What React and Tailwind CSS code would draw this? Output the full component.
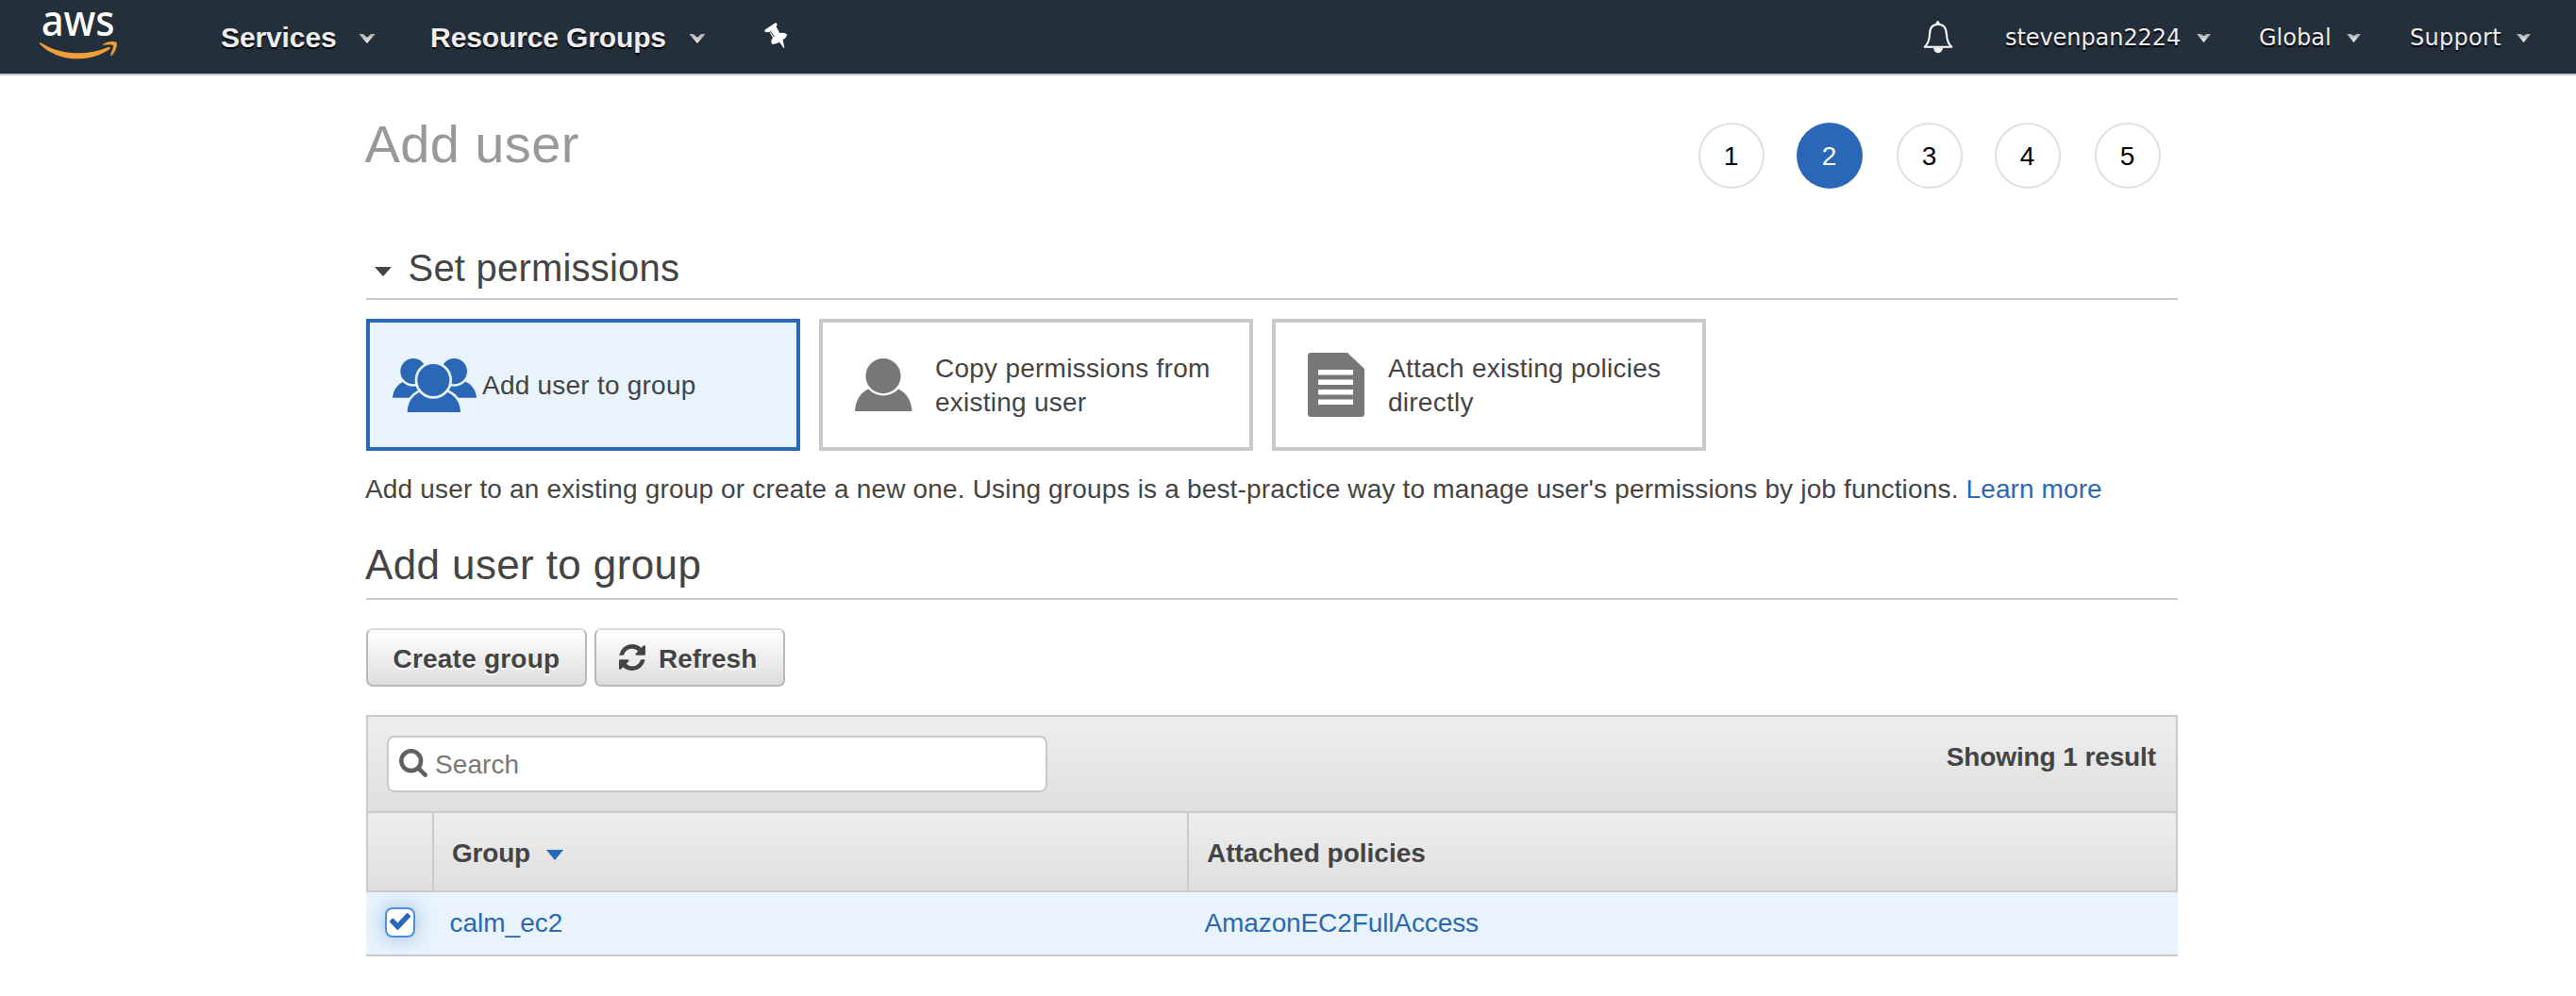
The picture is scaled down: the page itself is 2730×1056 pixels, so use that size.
function NavCaret({ large = false }) {
  return large ? (
    <svg viewBox="0 0 54 30" className="h-[10px] w-[18px]">
      <defs>
        <linearGradient id="caretLarge" x1="0" y1="0" x2="0" y2="1">
          <stop offset="0" stopColor="#a8a8a8" />
          <stop offset="1" stopColor="#f2f2f2" />
        </linearGradient>
      </defs>
      <path d="M1 0H15L27 11 39 0H53L27 30Z" fill="url(#caretLarge)" />
    </svg>
  ) : (
    <svg viewBox="0 0 44 26" className="h-[9px] w-[15px]">
      <defs>
        <linearGradient id="caretSmall" x1="0" y1="0" x2="0" y2="1">
          <stop offset="0" stopColor="#a8a8a8" />
          <stop offset="1" stopColor="#f5f5f5" />
        </linearGradient>
      </defs>
      <path d="M0 0H13L22 6 31 0H44L22 26Z" fill="url(#caretSmall)" />
    </svg>
  );
}

function AwsLogo() {
  return (
    <svg viewBox="60 0 258 192" className="h-[64px] w-[86px] overflow-visible [text-shadow:none]">
      <text
        x="71"
        y="115"
        fontSize="134"
        fontFamily="'Noto Sans', sans-serif"
        fontWeight="500"
        fill="#ffffff"
        textLength="234"
        lengthAdjust="spacingAndGlyphs"
      >
        aws
      </text>
      <path
        fill="#f29d38"
        d="M66 140Q65 133 73 138C140 178 220 176 284 150Q292 148 290 155C262 176 220 187 187 187C135 187 95 168 66 140Z"
      />
      <path
        fill="#f29d38"
        d="M266 142C278 132 300 129 311 135C314 145 307 166 294 178Q290 178 292 172C297 160 302 147 299 144C293 140 280 142 268 143Z"
      />
    </svg>
  );
}

function PinIcon() {
  return (
    <svg viewBox="363 43 75 84" className="h-[28px] w-[25px]">
      <path
        fill="#ffffff"
        d="M364 66L398 44Q404 43 404 50L401 56L412 76Q428 73 436 81Q434 90 422 98L427 124L425 124L411 105Q398 113 387 111Q382 102 390 91L379 72L370 74Q363 72 364 66Z"
      />
      <path d="M382 69L394 88" stroke="#242f3c" strokeWidth="3" />
    </svg>
  );
}

function BellIcon() {
  return (
    <svg viewBox="23 36 96 104" className="h-[35px] w-[32px]" fill="none">
      <circle cx="70" cy="42" r="5.5" fill="#ffffff" />
      <path
        d="M28 119C40 108 43 96 44 80C44 58 54 47 71 47C88 47 97 58 98 80C99 96 102 108 114 119Z"
        stroke="#ffffff"
        strokeWidth="6"
        strokeLinejoin="round"
      />
      <path d="M56 122H86C85 132 78 138 71 138C63 138 57 132 56 122Z" fill="#ffffff" />
      <path d="M61 127L70 133" stroke="#8a9199" strokeWidth="2" />
    </svg>
  );
}

function GroupIcon() {
  return (
    <svg viewBox="0 0 267 171" className="h-[57px] w-[89px] shrink-0" fill="#2a67b7">
      <path d="M0 125C2 98 20 76 44 72H130V125Z" />
      <path d="M267 125C265 98 247 76 223 72H130V125Z" />
      <circle cx="66" cy="41" r="44.5" stroke="#e8f3fd" strokeWidth="7" />
      <circle cx="196" cy="41" r="44.5" stroke="#e8f3fd" strokeWidth="7" />
      <path
        d="M47 175C47 140 62 118 90 106H170C200 118 216 140 216 175Z"
        stroke="#e8f3fd"
        strokeWidth="16"
        paintOrder="stroke"
      />
      <circle cx="130" cy="69" r="55" stroke="#e8f3fd" strokeWidth="8" />
    </svg>
  );
}

function UserIcon() {
  return (
    <svg viewBox="0 0 61 56" className="h-[56px] w-[61px] shrink-0" fill="#777777">
      <circle cx="30" cy="18.6" r="18.6" />
      <path d="M0 56C1 44 6 36 14.5 32.5C22 41.5 38 41.5 46 32.5C54 36 60 44 60.5 56Z" />
    </svg>
  );
}

function DocumentIcon() {
  return (
    <svg viewBox="0 0 60 68" className="h-[68px] w-[60px] shrink-0" fill="#777777">
      <path d="M3 0H42L60 17V65Q60 68 57 68H3Q0 68 0 65V3Q0 0 3 0Z" />
      <path fill="#ffffff" d="M11 18H48V23.5H11ZM11 28.5H48V34H11ZM11 39H48V44.5H11ZM11 49.5H48V55H11Z" />
    </svg>
  );
}

function RefreshIcon() {
  return (
    <svg viewBox="0 0 1536 1536" className="-mt-[4px] size-[28px]" fill="currentColor">
      <path d="M1511 928q0 5-1 7-64 268-268 434.5t-478 166.5q-146 0-282.5-55t-243.5-157l-129 129q-19 19-45 19t-45-19-19-45v-448q0-26 19-45t45-19h448q26 0 45 19t19 45-19 45l-137 137q71 66 161 102t187 36q134 0 250-65t186-179q11-17 53-117 8-23 30-23h192q13 0 22.5 9.5t9.5 22.5zm25-800v448q0 26-19 45t-45 19h-448q-26 0-45-19t-19-45 19-45l138-138q-148-137-349-137-134 0-250 65t-186 179q-11 17-53 117-8 23-30 23h-199q-13 0-22.5-9.5t-9.5-22.5v-7q65-268 270-434.5t480-166.5q146 0 284 55.5t245 156.5l130-129q19-19 45-19t45 19 19 45z" />
    </svg>
  );
}

function SearchIcon() {
  return (
    <svg viewBox="64 128 1664 1664" className="-mt-[2px] size-[30px]" fill="#606060">
      <path d="M1216 832q0-185-131.5-316.5t-316.5-131.5-316.5 131.5-131.5 316.5 131.5 316.5 316.5 131.5 316.5-131.5 131.5-316.5zm512 832q0 52-38 90t-90 38q-54 0-90-38l-343-342q-179 124-399 124-143 0-273.5-55.5t-225-150-150-225-55.5-273.5 55.5-273.5 150-225 225-150 273.5-55.5 273.5 55.5 225 150 150 225 55.5 273.5q0 220-124 399l343 343q37 37 37 90z" />
    </svg>
  );
}

function CheckIcon() {
  return (
    <svg viewBox="121 334 1550 1188" preserveAspectRatio="none" className="-mt-[2px] h-[18px] w-[22px]" fill="currentColor">
      <path d="M1671 566q0 40-28 68l-724 724-136 136q-28 28-68 28t-68-28l-136-136-362-362q-28-28-28-68t28-68l136-136q28-28 68-28t68 28l294 295 656-657q28-28 68-28t68 28l136 136q28 28 28 68z" />
    </svg>
  );
}

function Step({ number, active }) {
  return (
    <div
      className={
        active
          ? "flex size-[70px] items-center justify-center rounded-full bg-[#2a67b7] pt-[2px] pr-px text-[28px] text-white"
          : "flex size-[70px] items-center justify-center rounded-full border-2 border-[#e1e1e1] bg-white pt-[2px] pr-px text-[28px] text-black"
      }
    >
      {number}
    </div>
  );
}

function Header() {
  return (
    <header className="flex h-[80px] items-start justify-between border-b-2 border-[#c9c7c9] bg-[#242f3c] leading-[80px] text-[#eeeeee] [text-shadow:0_2px_1px_#000]">
      <div className="flex h-[78px] items-start text-[30px] font-bold">
        <div className="ml-[40px]">
          <AwsLogo />
        </div>
        <span className="ml-[108px] tracking-[-0.108px]">Services</span>
        <span className="mt-[36px] ml-[23.5px]">
          <NavCaret large />
        </span>
        <span className="ml-[58px] tracking-[-0.13px]">Resource Groups</span>
        <span className="mt-[36px] ml-[24px]">
          <NavCaret large />
        </span>
        <span className="mt-[24px] ml-[62px]">
          <PinIcon />
        </span>
      </div>
      <div className="flex h-[78px] items-start pr-[48px] font-['DejaVu_Sans','Liberation_Sans',sans-serif] text-[24px]">
        <span className="mt-[22px] mr-[55px]">
          <BellIcon />
        </span>
        <span className="w-[203px] tracking-[-0.07px]">stevenpan2224</span>
        <span className="mt-[36px] mr-[51px]">
          <NavCaret />
        </span>
        <span className="w-[93px]">Global</span>
        <span className="mt-[36px] mr-[52px]">
          <NavCaret />
        </span>
        <span className="w-[113px] tracking-[0.3px]">Support</span>
        <span className="mt-[36px]">
          <NavCaret />
        </span>
      </div>
    </header>
  );
}

function PermissionOptions() {
  return (
    <div className="mt-5 flex gap-5 leading-[36px]">
      <div className="flex h-[140px] w-[460px] items-center border-4 border-[#2a67b7] bg-[#e8f3fd] pl-[24px]">
        <GroupIcon />
        <span className="ml-[6px] pt-[2px] tracking-[0.23px]">Add user to group</span>
      </div>
      <div className="flex h-[140px] w-[460px] items-center border-4 border-[#cacaca] pl-[34px]">
        <UserIcon />
        <div className="ml-[24px] pt-[2px] tracking-[0.25px]">
          Copy permissions from
          <br />
          existing user
        </div>
      </div>
      <div className="flex h-[140px] w-[460px] items-center border-4 border-[#cacaca] pl-[34px]">
        <DocumentIcon />
        <div className="ml-[25px] pt-[2px] tracking-[0.25px]">
          Attach existing policies
          <br />
          directly
        </div>
      </div>
    </div>
  );
}

function GroupTable() {
  return (
    <div className="mt-[30px]">
      <div className="flex h-[102px] items-start justify-between border-x-2 border-t-2 border-[#cacaca] bg-linear-to-b from-[#eeeeee] to-[#dfdfdf] pt-[20px] pr-[21px] pl-[20px]">
        <label className="flex h-[60px] w-[700px] items-center rounded-[8px] border-2 border-[#cacaca] bg-white pl-[11px]">
          <SearchIcon />
          <input
            className="ml-[8px] w-[600px] pt-[2px] tracking-[0.07px] outline-none placeholder:text-[#777777] placeholder:opacity-100"
            placeholder="Search"
          />
        </label>
        <span className="mt-[5px] leading-[36px] font-bold tracking-[-0.11px]">Showing 1 result</span>
      </div>
      <div className="grid h-[86px] grid-cols-[70px_800px_1fr] border-2 border-[#cacaca] bg-linear-to-b from-[#eeeeee] to-[#dfdfdf] font-bold">
        <div className="border-r-2 border-[#cacaca]" />
        <div className="flex items-center border-r-2 border-[#cacaca] pt-[4px] pl-[19px]">
          <span className="tracking-[-0.2px]">Group</span>
          <svg viewBox="0 0 18 11" className="mt-[3px] ml-[17px] h-[11px] w-[18px]">
            <path d="M0 0H18L9 11Z" fill="#2a67b7" />
          </svg>
        </div>
        <div className="flex items-center pt-[4px] pl-[19px]">Attached policies</div>
      </div>
      <div className="grid h-[68px] grid-cols-[88.5px_801px_1fr] items-center border-b-2 border-[#cacaca] bg-[#e8f3fd] text-[#2a67b7]">
        <div className="-mt-[2px] ml-[20px] flex size-[32px] items-center justify-center rounded-[8px] border-2 border-[#4a8fdf] bg-white shadow-[0_0_20px_rgba(42,103,183,0.4)]">
          <CheckIcon />
        </div>
        <span>calm_ec2</span>
        <span className="-ml-px tracking-[-0.11px]">AmazonEC2FullAccess</span>
      </div>
    </div>
  );
}

const buttonClass =
  "flex h-[62px] items-center rounded-[7px] border-2 border-[#b8b8b8] border-t-[#dadada] bg-linear-to-b from-white to-[#dddddd] pt-[3px] font-bold [text-shadow:0_2px_2px_#fff]";

export default function App() {
  return (
    <div className="h-[1056px] w-[2730px] overflow-hidden bg-white font-['Liberation_Sans',Arial,sans-serif] text-[28px] text-[#444444]">
      <Header />
      <main className="mr-[422px] ml-[388px] w-[1920px]">
        <div className="flex items-start justify-between pt-[36px] pr-[18px]">
          <h1 className="-ml-[1.5px] text-[56px] leading-[73px] tracking-[0.4px] text-[#999999]">Add user</h1>
          <div className="mt-[14px] flex gap-[34px] [&>*:nth-child(2n+3)]:ml-[2px]">
            <Step number={1} />
            <Step number={2} active />
            <Step number={3} />
            <Step number={4} />
            <Step number={5} />
          </div>
        </div>

        <h2 className="mt-[60px] flex h-[58px] items-start border-b-2 border-[#cacaca] text-[40px] leading-[48px] tracking-[0.21px]">
          <svg viewBox="0 0 18 10" className="mt-[23px] ml-[9px] h-[10px] w-[18px]">
            <path d="M0 0H18L9 10Z" fill="#444444" />
          </svg>
          <span className="ml-[17.5px]">Set permissions</span>
        </h2>

        <PermissionOptions />

        <p className="mt-[23px] -ml-px leading-[36px] whitespace-nowrap tracking-[0.17px]">
          Add user to an existing group or create a new one. Using groups is a best-practice way to manage user's
          permissions by job functions. <a className="tracking-[0.1px] text-[#2a67b7]">Learn more</a>
        </p>

        <h2 className="mt-[36px] h-[63px] border-b-2 border-[#cacaca] text-[44px] leading-[52px] tracking-[0.38px]">
          <span className="-ml-px">Add user to group</span>
        </h2>

        <div className="mt-[30px] flex gap-[8px]">
          <button className={`${buttonClass} w-[234px] pl-[26.5px] tracking-[0.21px]`}>Create group</button>
          <button className={`${buttonClass} w-[202px] pl-[24px]`}>
            <RefreshIcon />
            <span className="ml-[14px]">Refresh</span>
          </button>
        </div>

        <GroupTable />
      </main>
    </div>
  );
}
